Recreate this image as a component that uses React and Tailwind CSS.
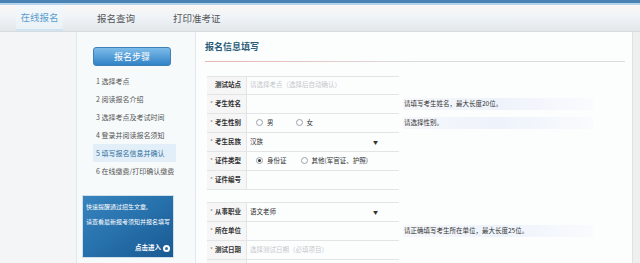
import React from "react";

const F = { fontFamily: '"Noto Sans CJK SC", "Noto Sans", sans-serif' };

function Radio({ checked }) {
  return (
    <span className="inline-flex items-center justify-center w-[7px] h-[7px] rounded-full border border-[#9aa3aa] bg-white mr-[4px]">
      {checked && <span className="w-[3px] h-[3px] rounded-full bg-[#333]" />}
    </span>
  );
}

function Row({ label, star = true, children, help, h = "h-[19px]" }) {
  return (
    <div className={`flex shrink-0 ${h}`}>
      <div className="flex w-[192px] border-b border-[#e2e4e6]">
        <div className="w-[40px] bg-[#f6f6f6] border-r border-[#e2e4e6] flex items-center pl-[3px] text-[6.5px] font-bold text-[#333]">
          <span className="w-[5px] text-[#888] font-normal">{star ? "*" : ""}</span>
          {label}
        </div>
        <div className="flex-1 flex items-center pl-[3px] text-[6.5px] text-[#333]">{children}</div>
      </div>
      {help && (
        <div className="ml-[4px] mt-[3px] h-[12px] w-[190px] flex items-center pl-[1px] text-[6.5px] text-[#333] bg-gradient-to-r from-[#f6f7fa] via-[#eef3fb] to-[#f9fbfd]">
          {help}
        </div>
      )}
    </div>
  );
}

function Select({ value }) {
  return (
    <div className="w-[130px] flex items-center justify-between pr-[2px]">
      <span>{value}</span>
      <span className="text-[5px] text-[#333]">▼</span>
    </div>
  );
}

export default function App() {
  const steps = [
    "1 选择考点",
    "2 阅读报名介绍",
    "3 选择考点及考试时间",
    "4 登录并阅读报名须知",
    "5 填写报名信息并确认",
    "6 在线缴费/打印确认缴费",
  ];
  return (
    <div style={F} className="w-[640px] h-[263px] overflow-hidden bg-[#fafdfd] flex flex-col">
      <div className="h-[3px] shrink-0 bg-[#4a82b4]" />
      <div className="h-[2px] shrink-0 bg-[#b6d4ec]" />
      <div className="h-[27px] shrink-0 flex items-stretch bg-gradient-to-b from-[#fbf7f3] via-[#eef3f8] to-[#e3e7ea] border-b border-[#d6dbde] pl-[16px]">
        <div className="w-[47px] flex items-center justify-center text-[9.5px] text-[#5a9ccf] bg-gradient-to-b from-[#f4f8fb] to-[#eaf2f7] border-b-2 border-[#cfe3f0]">
          在线报名
        </div>
        <div className="ml-[34px] flex items-center text-[9.5px] text-[#555]">报名查询</div>
        <div className="ml-[38px] flex items-center text-[9.5px] text-[#555]">打印准考证</div>
      </div>
      <div className="flex-1 min-h-0 flex overflow-hidden">
        <div className="w-[76px] shrink-0 bg-[#f3f5f7]" />
        <div className="w-[120px] shrink-0 bg-[#f7fafb] border-x border-[#e3e8ea] flex flex-col">
          <div className="mt-[15px] ml-[16px] w-[78px] h-[19px] shrink-0 rounded-[3px] border border-[#3f80b6] bg-gradient-to-b from-[#7dbce9] to-[#2f82c6] flex items-center justify-center text-[9px] text-white">
            报名步骤
          </div>
          <div className="mt-[6px] flex flex-col">
            {steps.map((s, i) => (
              <div
                key={s}
                className={`ml-[16px] w-[83px] h-[18px] shrink-0 flex items-center pl-[3px] text-[7px] ${
                  i === 4 ? "bg-[#e2eef8] text-[#2f6f9f]" : "text-[#555]"
                }`}
              >
                {s}
              </div>
            ))}
          </div>
          <div className="mt-[15px] ml-[5px] w-[92px] h-[63px] shrink-0 border border-[#cfe0ec] bg-gradient-to-br from-[#3784bf] via-[#2670ab] to-[#1a5a92] flex flex-col px-[3px] text-white text-[6px] whitespace-nowrap">
            <div className="mt-[6px]">快速提醒通过招生文章,</div>
            <div className="mt-[6px]">请查看最新报考须知并报名填写</div>
            <div className="mt-auto mb-[4px] self-end flex items-center gap-[2px] font-bold text-[6.5px]">
              点击进入
              <span className="w-[7px] h-[7px] rounded-full bg-white flex items-center justify-center">
                <span className="w-[3px] h-[3px] rounded-full bg-[#2670ab]" />
              </span>
            </div>
          </div>
        </div>
        <div className="flex-1 bg-[#fcfefe] flex flex-col pl-[9px] pr-[7px]">
          <div className="mt-[8px] text-[9px] font-bold text-[#2a5c78]">报名信息填写</div>
          <div className="mt-[7px] h-[1px] shrink-0 bg-gradient-to-r from-[#e9b4b4] via-[#dcdcdc] to-[#dcdcdc]" />
          <div className="mt-[14px] ml-[2px] flex flex-col">
            <div className="w-[192px] border-t border-[#e2e4e6]" />
            <Row label="测试站点" star={false} h="h-[18px]">
              <span className="text-[#c5c8cc]">请选择考点（选择后自动确认）</span>
            </Row>
            <Row label="考生姓名" help="请填写考生姓名，最大长度20位。" />
            <Row label="考生性别" help="请选择性别。">
              <span className="ml-[6px]" /><Radio />男<span className="ml-[22px]" /><Radio />女
            </Row>
            <Row label="考生民族">
              <Select value="汉族" />
            </Row>
            <Row label="证件类型">
              <span className="ml-[6px]" /><Radio checked />身份证<span className="ml-[14px]" /><Radio />其他(军官证、护照)
            </Row>
            <Row label="证件编号" />
            <div className="h-[12px] shrink-0" />
            <div className="w-[192px] border-t border-[#e2e4e6]" />
            <Row label="从事职业">
              <Select value="语文老师" />
            </Row>
            <Row label="所在单位" help="请正确填写考生所在单位，最大长度25位。" />
            <Row label="测试日期">
              <span className="text-[#c5c8cc]">选择测试日期（必填项目）</span>
            </Row>
            <Row label="测试时间" help="请选择测试时间段，最大长度20位。">
              <span className="text-[#c5c8cc]">选择测试时间（必填项目）</span>
            </Row>
          </div>
        </div>
        <div className="w-[8px] shrink-0 bg-[#eef0ef] border-l border-[#dfe3e2]" />
      </div>
    </div>
  );
}
